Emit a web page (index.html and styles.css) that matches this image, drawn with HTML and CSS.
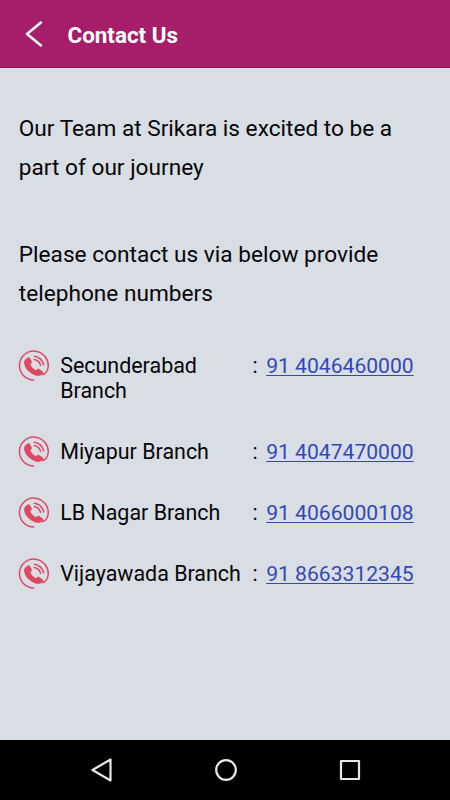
FILE: index.html
```html
<!DOCTYPE html>
<html lang="en">
<head>
<meta charset="utf-8">
<title>Contact Us</title>
<link rel="stylesheet" href="styles.css">
</head>
<body>
<svg width="0" height="0" class="defs">
  <symbol id="call" viewBox="0 0 32 32">
    <path d="M16.200 29.900A14.400 14.400 0 1 1 30.100 17.500C29.600 21 27.600 24 24 24.800" fill="none" stroke="currentColor" stroke-width="1.500"/>
    <path d="M7 9.700 9.700 7.500c.8-.6 1.600-.4 2.100.4l1.900 3.300c.5.900.2 1.600-.5 2.200l-1 .7c.8 2.500 3 4.800 5.800 6.100l1.300-1c.7-.5 1.400-.5 2.100 0l3.300 2.300c.8.600.8 1.400.3 2-2.100 2.700-5.200 2.900-8.700 1.400C11.300 22.900 7.300 18.700 6.300 14c-.4-1.600-.2-3.300.7-4.300z" fill="currentColor"/>
    <path d="M16.300 9.600q4.700.8 6.300 5.700M16.300 6.200q7.300.9 9.400 8.600" fill="none" stroke="currentColor" stroke-width="1.500" stroke-linecap="round"/>
  </symbol>
</svg>
<div class="screen">
  <header class="bar">
    <svg class="back" viewBox="0 0 20 28"><path d="M17 2.500 3 14 17 25.500"/></svg>
    <h1>Contact Us</h1>
  </header>
  <main>
    <p>Our Team at Srikara is excited to be a<br>part of our journey</p>
    <p>Please contact us via below provide<br>telephone numbers</p>
    <ul class="branches">
      <li><svg class="call"><use href="#call"/></svg><span class="name">Secunderabad Branch</span><span class="colon">:</span><a href="tel:914046460000">91 4046460000</a></li>
      <li><svg class="call"><use href="#call"/></svg><span class="name">Miyapur Branch</span><span class="colon">:</span><a href="tel:914047470000">91 4047470000</a></li>
      <li><svg class="call"><use href="#call"/></svg><span class="name">LB Nagar Branch</span><span class="colon">:</span><a href="tel:914066000108">91 4066000108</a></li>
      <li><svg class="call"><use href="#call"/></svg><span class="name">Vijayawada Branch</span><span class="colon">:</span><a href="tel:918663312345">91 8663312345</a></li>
    </ul>
  </main>
  <nav class="system">
    <svg viewBox="0 0 26 26"><path d="M21.500 2.500v21L3.500 13z"/></svg>
    <svg viewBox="0 0 26 26"><circle cx="13" cy="13" r="9.800"/></svg>
    <svg viewBox="0 0 26 26"><path d="M4 4h18v18H4z"/></svg>
  </nav>
</div>
</body>
</html>
```
FILE: styles.css
```css
* { box-sizing: border-box; margin: 0; padding: 0; }
body { font-family: Roboto, sans-serif; color: #060608; background: #d9dde4; }
.defs { position: absolute; }
.screen { width: 450px; height: 800px; display: flex; flex-direction: column; }
.bar { height: 68px; flex: none; display: flex; align-items: center; padding: 1px 0 0 24px; background: #a61e69; border-bottom: 1px solid #9c0f5b; color: #fff; }
.back { width: 20px; height: 28px; margin: -1px 23.500px 0 0; fill: none; stroke: #fff; stroke-width: 2.5; stroke-linecap: round; stroke-linejoin: round; }
h1 { font-size: 22.4px; font-weight: 700; line-height: 28px; padding-top: 2px; }
main { flex: 1; padding: 41px 18.8px 0; }
p { font-size: 22.65px; line-height: 39px; margin-bottom: 48px; white-space: nowrap; }
.branches { list-style: none; font-size: 21.45px; line-height: 25px; display: grid; gap: 36px; margin-top: -8px; }
.branches li { display: flex; align-items: flex-start; }
.call { width: 32px; height: 32px; margin: -3px 10.4px -8px -1px; color: #de4863; flex: none; }
.name { width: 192.2px; }
.colon { width: 13.8px; }
a { color: #3149b5; font-size: 21.1px; text-decoration: underline; text-decoration-thickness: 1px; text-underline-offset: 2px; white-space: nowrap; }
.system { height: 60px; flex: none; background: #000; display: flex; justify-content: center; align-items: center; gap: 98px; padding-left: 1px; }
.system svg { width: 26px; height: 26px; fill: none; stroke: #e8e8e8; stroke-width: 2.2; stroke-linejoin: round; }
```
